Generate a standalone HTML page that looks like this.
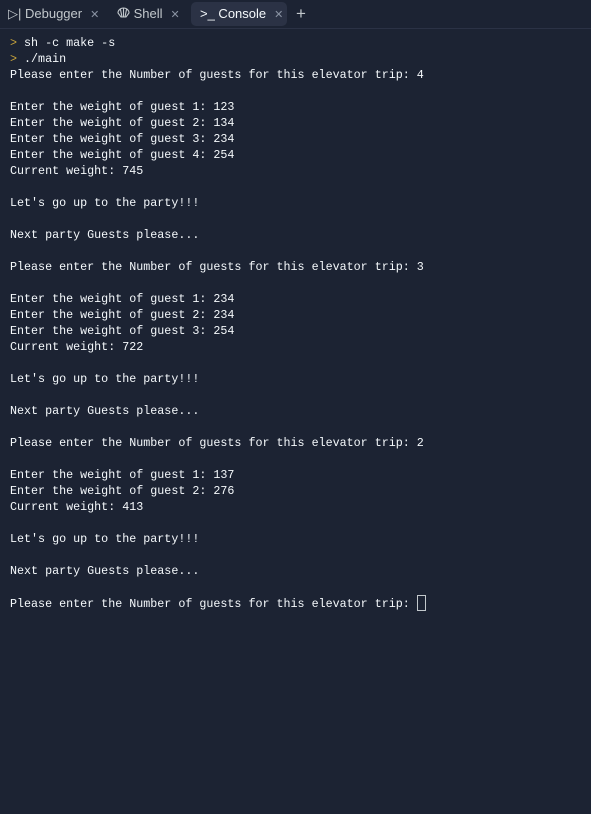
<!DOCTYPE html>
<html><head><style>
body{margin:0;width:591px;height:814px;background:#1c2333;overflow:hidden;font-family:"Liberation Sans",sans-serif;}
.bar{height:28px;border-bottom:1px solid #2b3245;position:relative;color:#c2c8cc;font-size:13px;}
.tab{position:absolute;top:2px;height:24px;line-height:24px;}
.act{background:#2b3245;border-radius:5px;color:#f5f9fc;}
.x{color:#8a93a3;font-size:11px;margin-left:8px;}
pre{margin:0;position:absolute;top:35px;left:10px;font-family:"Liberation Mono",monospace;font-size:11.7px;line-height:16px;color:#f5f9fc;}
.p{color:#c7a33c;}
.cur{display:inline-block;width:7px;height:14px;border:1px solid #c2c8cc;vertical-align:-4px;}
</style></head><body>
<div class="bar">
<div class="tab" style="left:8px">▷| Debugger<span class="x">✕</span></div>
<div class="tab" style="left:117px"><svg width="13" height="12" viewBox="0 0 13 12" style="vertical-align:-1px"><path d="M1 6 A5.5 5 0 0 1 12 6 L9 10 H4 Z M6.5 1 V10 M3.5 2.5 L5 10 M9.5 2.5 L8 10" fill="none" stroke="#c2c8cc" stroke-width="1.1"/></svg> Shell<span class="x">✕</span></div>
<div class="tab act" style="left:191px;width:96px;padding-left:9px;box-sizing:border-box">&gt;_ Console<span class="x">✕</span></div>
<div class="tab" style="left:296px;font-size:17px">+</div>
</div>
<pre><span class="p">&gt;</span> sh -c make -s
<span class="p">&gt;</span> ./main
Please enter the Number of guests for this elevator trip: 4

Enter the weight of guest 1: 123
Enter the weight of guest 2: 134
Enter the weight of guest 3: 234
Enter the weight of guest 4: 254
Current weight: 745

Let's go up to the party!!!

Next party Guests please...

Please enter the Number of guests for this elevator trip: 3

Enter the weight of guest 1: 234
Enter the weight of guest 2: 234
Enter the weight of guest 3: 254
Current weight: 722

Let's go up to the party!!!

Next party Guests please...

Please enter the Number of guests for this elevator trip: 2

Enter the weight of guest 1: 137
Enter the weight of guest 2: 276
Current weight: 413

Let's go up to the party!!!

Next party Guests please...

Please enter the Number of guests for this elevator trip: <span class="cur"></span></pre>
</body></html>
